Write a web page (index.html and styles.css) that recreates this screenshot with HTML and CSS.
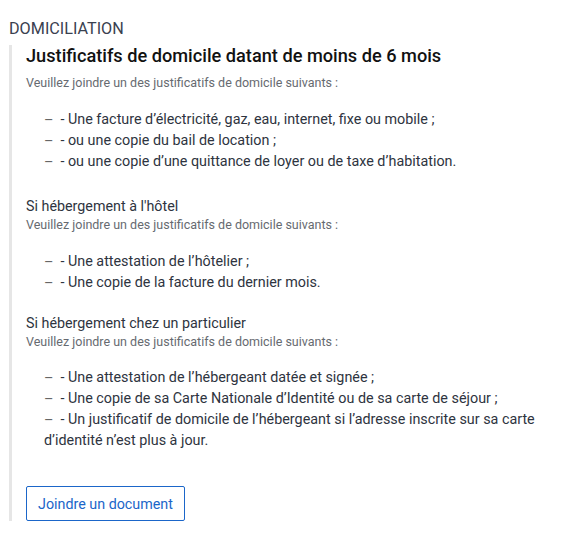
FILE: index.html
```html
<!DOCTYPE html>
<html lang="fr">
<head>
    <meta charset="UTF-8">
    <meta name="viewport" content="width=device-width, initial-scale=1.0">
    <title>Domiciliation</title>
    <link rel="stylesheet" href="styles.css">
</head>
<body>

    <h3 class="section-label">DOMICILIATION</h3>

    <div class="piece">
        <h2>Justificatifs de domicile datant de moins de 6 mois</h2>
        <p class="hint">Veuillez joindre un des justificatifs de domicile suivants :</p>
        <ul class="docs">
            <li>- Une facture d’électricité, gaz, eau, internet, fixe ou mobile ;</li>
            <li>- ou une copie du bail de location ;</li>
            <li>- ou une copie d’une quittance de loyer ou de taxe d’habitation.</li>
        </ul>

        <p class="case">Si hébergement à l'hôtel</p>
        <p class="hint">Veuillez joindre un des justificatifs de domicile suivants :</p>
        <ul class="docs">
            <li>- Une attestation de l’hôtelier ;</li>
            <li>- Une copie de la facture du dernier mois.</li>
        </ul>

        <p class="case case-last">Si hébergement chez un particulier</p>
        <p class="hint">Veuillez joindre un des justificatifs de domicile suivants :</p>
        <ul class="docs docs-last">
            <li>- Une attestation de l’hébergeant datée et signée ;</li>
            <li>- Une copie de sa Carte Nationale d’Identité ou de sa carte de séjour ;</li>
            <li>- Un justificatif de domicile de l’hébergeant si l’adresse inscrite sur sa carte d’identité n’est plus à jour.</li>
        </ul>

        <button class="upload">Joindre un document</button>
    </div>

</body>
</html>
```

FILE: styles.css
```css
/* ====== base ====== */
* {
    margin: 0;
    padding: 0;
    box-sizing: border-box;
}

body {
    background: #fff;
    color: #2e3440;
    font-family: Roboto, "Liberation Sans", sans-serif;
    padding: 20px 9px 0 9px;
}

.section-label {
    font-size: 16.2px;
    font-weight: 400;
    line-height: 18px;
    color: #3a4150;
    margin-bottom: 7px;
}

/* ====== bloc pièce ====== */
.piece {
    border-left: 3px solid #e6e6e6;
    padding-left: 14px;
}

.piece h2 {
    font-size: 18.2px;
    font-weight: 500;
    line-height: 22px;
    color: #111;
    margin-bottom: 7px;
}

.hint {
    font-size: 12.5px;
    line-height: 18px;
    color: #666a70;
}

.case {
    font-size: 14.3px;
    line-height: 18px;
    color: #2e3440;
    margin-top: 25px;
    margin-bottom: 1px;
}

.case-last {
    margin-top: 21px;
}

.docs {
    list-style: none;
    padding-left: 18px;
    margin-top: 17px;
    max-width: 520px;
}

.docs-last {
    margin-top: 16px;
}

.docs li {
    font-size: 14.35px;
    line-height: 21px;
    color: #2e3440;
}

.docs li::before {
    content: "–";
    color: #666;
    margin-right: 7px;
    position: relative;
    top: 1px;
}

.upload {
    margin-top: 35px;
    background: #fff;
    border: 1px solid #1b66c9;
    border-radius: 2px;
    color: #1b66c9;
    font-family: Roboto, "Liberation Sans", sans-serif;
    font-size: 14.3px;
    height: 35px;
    padding: 0 11px;
    cursor: pointer;
}
```
